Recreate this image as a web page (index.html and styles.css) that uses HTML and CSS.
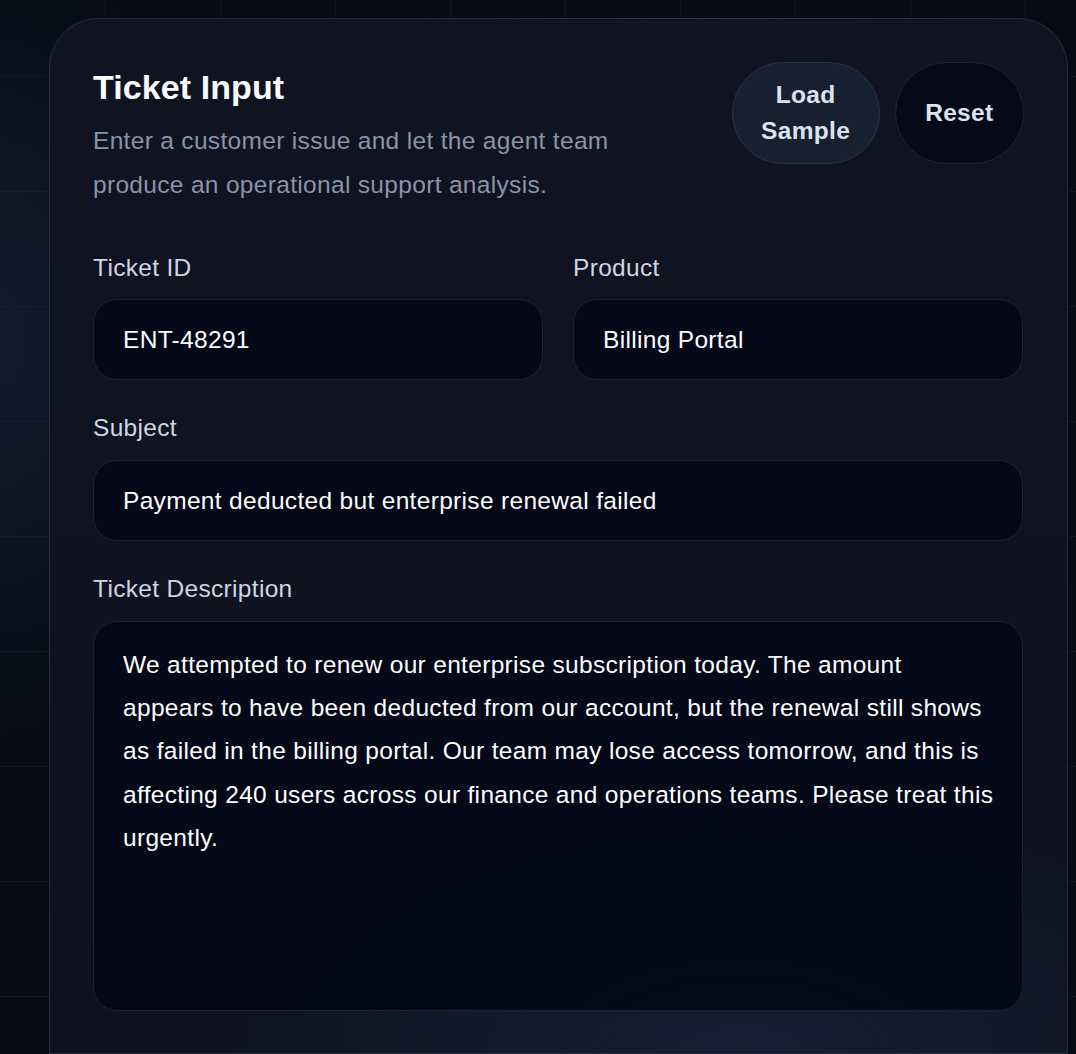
FILE: index.html
```html
<!DOCTYPE html>
<html lang="en">
<head>
<meta charset="utf-8">
<title>Ticket Input</title>
<link rel="stylesheet" href="styles.css">
</head>
<body>
  <main class="page">
    <section class="card">
      <header class="card-header">
        <div class="header-text">
          <h1 class="title">Ticket Input</h1>
          <p class="subtitle">Enter a customer issue and let the agent team produce an operational support analysis.</p>
        </div>
        <div class="actions">
          <button class="btn btn-sample" type="button">Load Sample</button>
          <button class="btn btn-reset" type="button">Reset</button>
        </div>
      </header>

      <form class="form">
        <div class="row">
          <div class="field">
            <label class="label" for="tid">Ticket ID</label>
            <input class="input" id="tid" type="text" value="ENT-48291">
          </div>
          <div class="field">
            <label class="label" for="product">Product</label>
            <input class="input" id="product" type="text" value="Billing Portal">
          </div>
        </div>
        <div class="field">
          <label class="label" for="subject">Subject</label>
          <input class="input" id="subject" type="text" value="Payment deducted but enterprise renewal failed">
        </div>
        <div class="field">
          <label class="label" for="desc">Ticket Description</label>
          <textarea class="textarea" id="desc">We attempted to renew our enterprise subscription today. The amount appears to have been deducted from our account, but the renewal still shows as failed in the billing portal. Our team may lose access tomorrow, and this is affecting 240 users across our finance and operations teams. Please treat this urgently.</textarea>
        </div>
      </form>
    </section>
  </main>
</body>
</html>
```

FILE: styles.css
```css
* { box-sizing: border-box; }

html, body {
  margin: 0;
  padding: 0;
}

body {
  font-family: "Liberation Sans", Arial, sans-serif;
  font-size: 24.5px;
  letter-spacing: 0.32px;
  color: #e2e8f0;
  background-color: #060a16;
  background-image:
    radial-gradient(ellipse 220px 420px at 0% 32%, rgba(30, 41, 64, 0.55), rgba(30, 41, 64, 0) 100%),
    linear-gradient(to right, rgba(148, 163, 184, 0.07) 1px, transparent 1px),
    linear-gradient(to bottom, rgba(148, 163, 184, 0.07) 1px, transparent 1px);
  background-size: auto, 115px 115px, 115px 115px;
  background-position: 0 0, 105px 0, 0 76px;
  height: 1054px;
  overflow: hidden;
}

.page {
  padding: 18px 8px 0 49px;
}

.card {
  border: 1px solid rgba(148, 163, 184, 0.16);
  border-radius: 50px 50px 0 0;
  background:
    radial-gradient(ellipse 520px 260px at 68% 1040px, rgba(28, 48, 78, 0.45), rgba(28, 48, 78, 0) 100%),
    linear-gradient(180deg, #0f1322 0%, #0e1220 100%);
  padding: 43px 44px 0 43px;
  height: 1036px;
}

.card-header {
  display: flex;
  justify-content: space-between;
  align-items: flex-start;
  gap: 24px;
  margin-bottom: 42px;
}

.title {
  margin: 2px 0 7px;
  font-size: 34px;
  line-height: 1.4;
  font-weight: 700;
  letter-spacing: 0.08px;
  color: #f8fafc;
}

.subtitle {
  margin: 0;
  max-width: 560px;
  line-height: 44px;
  color: #8b94a7;
}

.actions {
  display: flex;
  gap: 15px;
  margin-right: -1px;
}

.btn {
  font-family: inherit;
  font-size: 24.5px;
  font-weight: 700;
  letter-spacing: 0.32px;
  line-height: 36px;
  padding: 14px 29px;
  border-radius: 999px;
  color: #dce3ed;
  cursor: pointer;
}

.btn-sample {
  width: min-content;
  padding: 14px 28.5px;
  background: #172031;
  border: 1px solid #293346;
}

.btn-reset {
  padding: 14px 29.5px;
  background: #060a18;
  border: 1px solid #1d2535;
}

.form {
  display: flex;
  flex-direction: column;
  gap: 29px;
}

.row {
  display: grid;
  grid-template-columns: 1fr 1fr;
  gap: 30px;
}

.field {
  display: flex;
  flex-direction: column;
}

.label {
  display: block;
  line-height: 1.5;
  padding-top: 1px;
  color: #cfd6e1;
  margin-bottom: 13px;
}

.input,
.textarea {
  width: 100%;
  font-family: inherit;
  font-size: 24.5px;
  letter-spacing: 0.32px;
  color: #ffffff;
  background: rgba(3, 8, 23, 0.9);
  border: 1px solid #1a2232;
  border-radius: 24px;
  outline: none;
}

.input {
  height: 81px;
  padding: 0 29px;
}

.textarea {
  display: block;
  height: 390px;
  padding: 21px 24px 21px 29px;
  line-height: 43.3px;
  resize: none;
  overflow: hidden;
}
```
